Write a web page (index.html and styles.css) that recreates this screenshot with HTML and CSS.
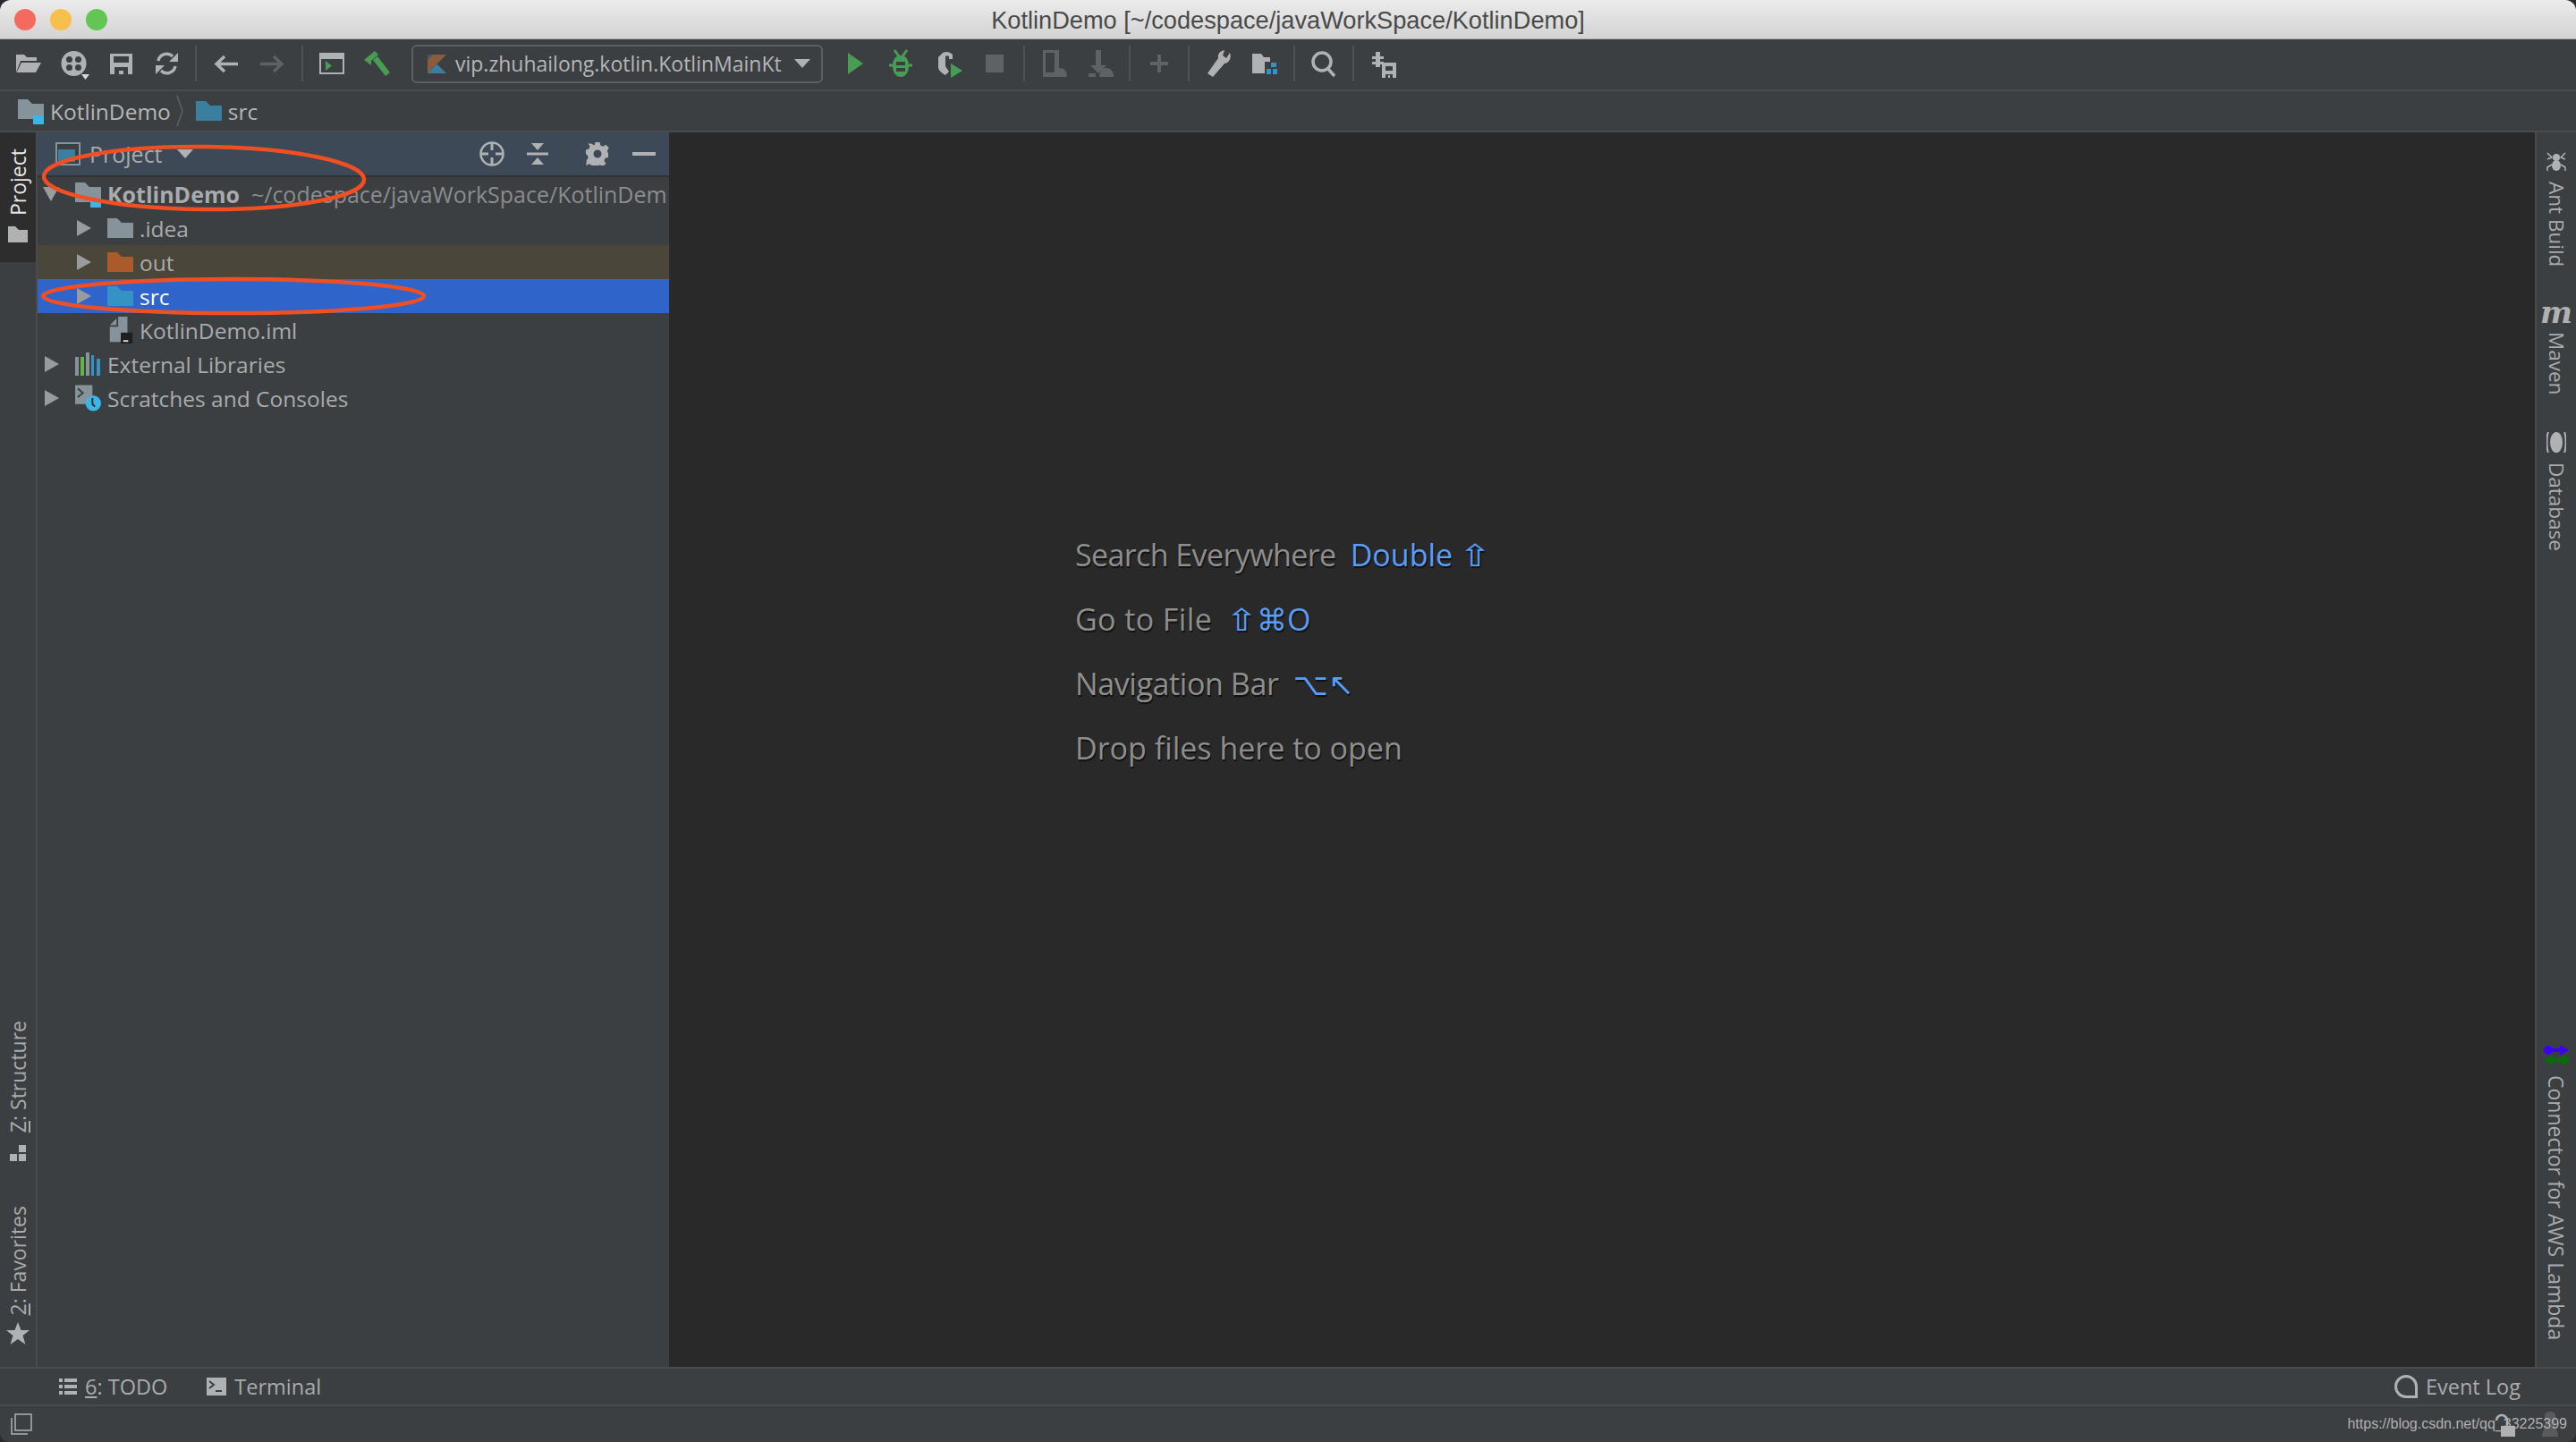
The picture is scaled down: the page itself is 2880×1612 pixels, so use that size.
FILE: index.html
```html
<!DOCTYPE html>
<html lang="en">
<head>
  <meta charset="UTF-8">
  <title>KotlinDemo</title>
  <link rel="stylesheet" href="styles.css">
</head>
<body>
  <svg class="defs" width="0" height="0">
    <symbol id="folder" viewBox="0 0 29 22"><path d="M0 0h11l5 5h13v17H0z"/></symbol>
  </svg>

  <div class="window">
    <header class="titlebar">
      <div class="lights">
        <span class="light red"></span>
        <span class="light yellow"></span>
        <span class="light green"></span>
      </div>
      <span class="title">KotlinDemo [~/codespace/javaWorkSpace/KotlinDemo]</span>
    </header>

    <div class="toolbar">
      <div class="tool-group files">
        <svg class="tool" viewBox="0 0 36 36"><path class="g" d="M4 8h9l3 3h11v4H9L4 28z"/><path class="g" d="M10 17h22l-6 11H4.5z"/></svg>
        <svg class="tool" viewBox="0 0 36 36"><path class="g" fill-rule="evenodd" d="M17.5 4a14 14 0 1 0 0 28 14 14 0 1 0 0-28z M12.5 10a3.5 3.5 0 1 0 0 7 3.500 3.500 0 1 0 0-7z M22.500 10a3.500 3.500 0 1 0 0 7 3.500 3.500 0 1 0 0-7z M12.500 19a3.500 3.500 0 1 0 0 7 3.500 3.500 0 1 0 0-7z M22.500 19a3.500 3.500 0 1 0 0 7 3.500 3.500 0 1 0 0-7z"/><path fill="#d8d8d8" d="M26 30h9l-4.500 6z"/></svg>
        <svg class="tool" viewBox="0 0 36 36"><path class="g" fill-rule="evenodd" d="M6 7h25v23H6z M10 10v7h17v-7z M11 22v8h5v-4h5v4h5v-8z"/></svg>
        <svg class="tool" viewBox="0 0 36 36"><path class="s" d="M9 15a9.500 9.500 0 0 1 16-5M28 21a9.500 9.500 0 0 1-16 5"/><path class="g" d="M31 6v10h-10zM6 30V20h10z"/></svg>
      </div>
      <span class="sep"></span>
      <div class="tool-group history">
        <svg class="tool" viewBox="0 0 36 36"><path class="s" d="M32 18.500H10M17 10l-9 8.500 9 8.500"/></svg>
        <svg class="tool" viewBox="0 0 36 36"><path class="s dim" d="M4 18.500h22M19 10l9 8.500-9 8.500"/></svg>
      </div>
      <span class="sep"></span>
      <div class="tool-group build">
        <svg class="tool" viewBox="0 0 36 36"><path class="g" fill-rule="evenodd" d="M4 6h28v24H4z M6 13v15h24V13z"/><path class="fill-green" d="M11 15l7 5.500-7 5.500z"/></svg>
        <svg class="tool" viewBox="0 0 36 36"><path class="fill-green" d="M4 14L16 4l4 4-8 7v5zM14 14l5-4 14 18-5 4z"/></svg>
      </div>

      <div class="run-combo">
        <svg class="kotlin" viewBox="0 0 21 21"><path fill="#8a5c3c" d="M0 0h21L0 21z"/><path fill="#3b7ea0" d="M0 21l10.500-10.500L21 21z"/><path fill="#3a5a78" d="M0 0h6L0 6z"/></svg>
        <span class="combo-text">vip.zhuhailong.kotlin.KotlinMainKt</span>
        <span class="down-arrow"></span>
      </div>

      <div class="tool-group run">
        <svg class="tool" viewBox="0 0 36 36"><path class="fill-green" d="M11 6l17 12-17 12z"/></svg>
        <svg class="tool" viewBox="0 0 36 36"><path class="fill-green" fill-rule="evenodd" d="M18 9c6 0 9 5 9 11.500S24 33 18 33 9 27 9 20.500 12 9 18 9z M13 16v4h10v-4z M13 23v4h10v-4z"/><path stroke="#499c54" stroke-width="3" d="M11 3l5 7M25 3l-5 7M5 20h4M27 20h4"/></svg>
        <svg class="tool" viewBox="0 0 36 36"><path class="g" d="M12 6c4-2 8-1 11 2v5h-4v-3c-2-1-3-1-4 0v11l4 6-4 4c-5-3-8-6-8-9V11z"/><path class="fill-green" d="M21 18l13 8-13 8z"/></svg>
        <svg class="tool" viewBox="0 0 36 36"><rect class="d" x="8" y="8" width="20" height="20"/></svg>
      </div>
      <span class="sep"></span>
      <div class="tool-group">
        <svg class="tool" viewBox="0 0 36 36"><path class="d" fill-rule="evenodd" d="M6 3h18v30H6z M9 6v22h10V6z"/><path class="d" d="M17 33c0-7 4-10 8-10s8 3 8 10z"/></svg>
        <svg class="tool" viewBox="0 0 36 36"><path class="d" d="M13 3h6v17h6l-9 9-9-9h6zM5 29h8v4H5z"/><path class="d" d="M17 33c0-7 4-10 8-10s8 3 8 10z"/></svg>
      </div>
      <span class="sep"></span>
      <svg class="tool" viewBox="0 0 36 36"><path class="d" d="M16 8h4v8h8v4h-8v8h-4v-8H8v-4h8z"/></svg>
      <span class="sep"></span>
      <div class="tool-group">
        <svg class="tool" viewBox="0 0 36 36"><path class="g" d="M31 6c2 5 0 11-6 12L12 33l-6-4 12-17c-1-5 2-8 7-9l-2 6 4 3z"/></svg>
        <svg class="tool" viewBox="0 0 36 36"><path class="g" d="M4 7h10l3 4h7v5h-6v13H4z"/><path fill="#3592c4" d="M25 17h6v5h-6zM20 24h5v6h-5zM27 24h5v6h-5z"/></svg>
      </div>
      <span class="sep"></span>
      <svg class="tool" viewBox="0 0 36 36"><circle class="ring" cx="16" cy="16" r="10"/><path class="s" d="M22 23l8 9"/></svg>
      <span class="sep"></span>
      <svg class="tool" viewBox="0 0 36 36"><path class="g" d="M6 10h4V5h5v5h4v3h-4v3h4v3h-4v3h-5v-3H6v-3h4v-3H6z"/><path class="g" fill-rule="evenodd" d="M17 17h16v17H17z M21 21v5h8v-5z M21 30v4h3v-3h2v3h3v-4z"/></svg>
    </div>

    <nav class="navbar">
      <svg class="nav-icon" viewBox="0 0 29 30"><path fill="#87939a" d="M0 2h11l5 5h13v17H0z"/><path fill="#3cb4e5" d="M17 20h12v12H17z"/></svg>
      <span class="crumb">KotlinDemo</span>
      <svg class="chevron" viewBox="0 0 10 34"><path d="M2 0l6 17-6 17" fill="none" stroke="#5f6163" stroke-width="1.500"/></svg>
      <svg class="nav-icon src-icon"><use href="#folder"/></svg>
      <span class="crumb">src</span>
    </nav>

    <div class="workspace">
      <aside class="strip left-strip">
        <div class="side-group">
          <div class="side-tab active">
            <span class="side-text">Project</span>
            <svg class="side-icon" width="22" height="18" viewBox="0 0 22 18"><path class="g" d="M0 0h8l4 4h10v14H0z"/></svg>
          </div>
        </div>
        <div class="side-group bottom">
          <div class="side-tab structure">
            <span class="side-text"><u>Z</u>: Structure</span>
            <svg class="side-icon" width="18" height="18" viewBox="0 0 18 18"><path class="g" d="M0 10h8v8H0zM10 0h8v8h-8zM10 10h8v8h-8z"/></svg>
          </div>
          <div class="side-tab">
            <span class="side-text"><u>2</u>: Favorites</span>
            <svg class="side-icon" width="26" height="25" viewBox="0 0 26 25"><path class="g" d="M13 0l3.500 9H26l-7.500 6 3 10L13 19l-8.500 6 3-10L0 9h9.500z"/></svg>
          </div>
        </div>
      </aside>

      <section class="project-panel">
        <div class="panel-header">
          <svg class="panel-icon" width="28" height="26" viewBox="0 0 28 26"><path fill="#87939a" d="M0 0h28v26H0z"/><path fill="#3b3f42" d="M2 2h24v22H2z"/><path fill="#3b7f9f" d="M3 8h19v14H3z"/></svg>
          <span class="panel-title">Project</span>
          <span class="down-arrow"></span>
          <div class="panel-actions">
            <svg width="30" height="30" viewBox="0 0 30 30"><circle class="ring thin" cx="15" cy="15" r="12.500"/><path class="g" d="M13.500 3h3v8h-3zM13.500 19h3v8h-3zM3 13.500h8v3H3zM19 13.500h8v3h-8z"/></svg>
            <svg width="24" height="24" viewBox="0 0 24 24"><path class="g" d="M5 0h14l-7 8zM0 10.500h24v3H0zM12 16l7 8H5z"/></svg>
            <span class="panel-sep"></span>
            <svg width="26" height="26" viewBox="0 0 26 26"><path class="g" fill-rule="evenodd" d="M10.500 0h5l.8 3.600 2.900 1.200 3.100-2 3.500 3.500-2 3.100 1.200 2.900 0 4.700-3.400.8-1.200 2.900 2 3.100-3.500 3.500-3.100-2-2.900 1.200-.8 2.500h-5l-.8-3.600-2.900-1.200-3.100 2L.8 20.200l2-3.100-1.200-2.900-1.600-.8v-5l3.400-.8 1.200-2.900-2-3.100L6.100 1.600l3.100 2 .8-1.200z M13 8.500a4.500 4.500 0 1 0 0 9 4.500 4.500 0 1 0 0-9z"/></svg>
            <svg class="minimize" width="26" height="4" viewBox="0 0 26 4"><path class="g" d="M0 0h26v4H0z"/></svg>
          </div>
        </div>

        <ul class="tree">
          <li class="row root">
            <span class="arrow open"></span>
            <svg class="tree-icon" viewBox="0 0 29 30"><path fill="#87939a" d="M0 2h11l5 5h13v17H0z"/><path fill="#3cb4e5" d="M17 20h12v12H17z"/></svg>
            <span class="label strong">KotlinDemo</span>
            <span class="path">~/codespace/javaWorkSpace/KotlinDem</span>
          </li>
          <li class="row nested">
            <span class="arrow"></span>
            <svg class="tree-icon folder-grey"><use href="#folder"/></svg>
            <span class="label">.idea</span>
          </li>
          <li class="row nested excluded">
            <span class="arrow"></span>
            <svg class="tree-icon folder-orange"><use href="#folder"/></svg>
            <span class="label">out</span>
          </li>
          <li class="row nested selected">
            <span class="arrow"></span>
            <svg class="tree-icon folder-blue"><use href="#folder"/></svg>
            <span class="label">src</span>
          </li>
          <li class="row nested">
            <span class="arrow blank"></span>
            <svg class="tree-icon" viewBox="0 0 29 32"><path fill="#87939a" d="M2 10L10 2v8zM12 0h11v30H2V12h10z"/><path fill="#1f1f1f" d="M15 19h14v13H15z"/><path fill="#ddd" d="M18 28h6v2h-6z"/></svg>
            <span class="label">KotlinDemo.iml</span>
          </li>
          <li class="row">
            <span class="arrow"></span>
            <svg class="tree-icon" viewBox="0 0 29 26"><path fill="#87939a" d="M0 5h4v21H0zM12 0h4v26h-4z"/><path fill="#62b543" d="M6 5h4v21H6z"/><path fill="#3592c4" d="M18 3h3v23h-3zM24 7h4v19h-4z"/></svg>
            <span class="label">External Libraries</span>
          </li>
          <li class="row">
            <span class="arrow"></span>
            <svg class="tree-icon" viewBox="0 0 30 30"><path fill="#87939a" d="M0 0h20v22H0z"/><path fill="none" stroke="#3c3f41" stroke-width="2" d="M3 4l6 5-6 5"/><circle fill="#3cb4e5" cx="21" cy="21" r="9"/><path fill="none" stroke="#2b2b2b" stroke-width="2" d="M20 15v7l3 3"/></svg>
            <span class="label">Scratches and Consoles</span>
          </li>
        </ul>
      </section>

      <main class="editor">
        <p class="hint search">Search Everywhere <b>Double <span class="key shift">⇧</span></b></p>
        <p class="hint goto">Go to File <b><span class="key shift">⇧</span><span class="key">⌘</span>O</b></p>
        <p class="hint navigate">Navigation Bar <b class="key">⌥↖</b></p>
        <p class="hint">Drop files here to open</p>
      </main>

      <aside class="strip right-strip">
        <div class="side-group">
          <div class="side-tab ant">
            <svg class="side-icon" width="22" height="22" viewBox="0 0 22 22"><ellipse class="g" cx="11" cy="6" rx="4" ry="4"/><ellipse class="g" cx="11" cy="15" rx="5" ry="6"/><path fill="none" stroke="#afb1b3" stroke-width="1.500" d="M1 1l5 5-5 2M21 1l-5 5 5 2M1 21v-4l5-3M21 21v-4l-5-3"/></svg>
            <span class="side-text">Ant Build</span>
          </div>
          <div class="side-tab maven">
            <span class="maven-m">m</span>
            <span class="side-text">Maven</span>
          </div>
          <div class="side-tab">
            <svg class="side-icon" width="22" height="23" viewBox="0 0 22 23"><path fill="none" stroke="#afb1b3" stroke-width="2" d="M2 0c-2 4-2 19 0 23M20 0c2 4 2 19 0 23"/><ellipse class="g" cx="11" cy="11.500" rx="7" ry="11.500"/></svg>
            <span class="side-text">Database</span>
          </div>
        </div>
        <div class="side-group">
          <div class="side-tab">
            <svg class="side-icon" width="28" height="23" viewBox="0 0 28 23"><circle fill="#3a00ff" cx="5" cy="6" r="5"/><path fill="#3a00ff" d="M5 4h13V0l10 6-10 6V8H5z"/><circle fill="#0a6b0a" cx="23" cy="17" r="5"/><path fill="#0a6b0a" d="M23 15H10v-4L0 17l10 6v-4h13z"/></svg>
            <span class="side-text long">Connector for AWS Lambda</span>
          </div>
        </div>
      </aside>
    </div>

    <div class="tool-tabs">
      <div class="tool-tab">
        <svg width="20" height="18" viewBox="0 0 20 18"><path class="g" d="M0 0h4v4H0zM6 0h14v4H6zM0 7h4v4H0zM6 7h14v4H6zM0 14h4v4H0zM6 14h14v4H6z"/></svg>
        <span><u>6</u>: TODO</span>
      </div>
      <div class="tool-tab terminal">
        <svg width="22" height="20" viewBox="0 0 22 20"><path class="g" d="M0 0h22v20H0z"/><path fill="none" stroke="#3c3f41" stroke-width="2" d="M3 4l5 4-5 4M10 15h7"/></svg>
        <span>Terminal</span>
      </div>
      <div class="tool-tab event-log">
        <svg width="26" height="26" viewBox="0 0 26 26"><path fill="none" stroke="#afb1b3" stroke-width="3" d="M24.500 24.500H13a11.500 11.500 0 1 1 11.500-11.500z"/></svg>
        <span>Event Log</span>
      </div>
    </div>

    <footer class="statusbar">
      <svg width="24" height="24" viewBox="0 0 24 24"><path fill="none" stroke="#afb1b3" stroke-width="1.500" d="M5 1h18v18H5zM1 5v18h18"/></svg>
      <svg class="person" width="18" height="28" viewBox="0 0 18 28"><path fill="#585a5c" d="M3 4a6 4 0 0 1 12 0v14l3 7v3H0v-3l3-7z"/></svg>
      <svg class="lock" width="24" height="26" viewBox="0 0 24 26"><path fill="none" stroke="#afb1b3" stroke-width="2.500" d="M3 8a6 6 0 0 1 12 0v6"/><path class="g" d="M8 14h16v12H8z"/></svg>
      <span class="watermark">https://blog.csdn.net/qq_33225399</span>
    </footer>
  </div>

  <svg class="marks" viewBox="0 0 2880 1612">
    <ellipse cx="228" cy="199" rx="179" ry="35" transform="rotate(0.600 228 199)"/>
    <ellipse cx="261" cy="331" rx="213" ry="19"/>
  </svg>
</body>
</html>
```

FILE: styles.css
```css
* {
  box-sizing: border-box;
  margin: 0;
  padding: 0;
}

body {
  height: 100vh;
  overflow: hidden;
  background: #2a2830;
  font-family: "Open Sans", "DejaVu Sans", sans-serif;
  color: #a9abad;
}

.defs {
  position: absolute;
}

.g {
  fill: #afb1b3;
}

.d {
  fill: #5f6163;
}

.s {
  fill: none;
  stroke: #afb1b3;
  stroke-width: 3.5;
}

.s.dim {
  stroke: #5f6163;
}

.ring {
  fill: none;
  stroke: #afb1b3;
  stroke-width: 3.5;
}

.ring.thin {
  stroke-width: 2.5;
}

.fill-green {
  fill: #499c54;
}

.window {
  height: 100%;
  display: flex;
  flex-direction: column;
  background: #3c3f41;
  border-radius: 12px 12px 10px 10px;
  overflow: hidden;
}

.titlebar {
  flex: none;
  height: 44px;
  display: flex;
  align-items: center;
  justify-content: center;
  position: relative;
  background: linear-gradient(#ebebeb, #d3d3d3);
  border-bottom: 1px solid #b0b0b0;
}

.title {
  padding-top: 2px;
  font: 27.2px "Liberation Sans", sans-serif;
  color: #4a4a4a;
}

.lights {
  position: absolute;
  left: 16px;
  top: 10px;
  display: flex;
  gap: 16px;
}

.light {
  width: 24px;
  height: 24px;
  border-radius: 50%;
}

.red { background: #f46a5f; }
.yellow { background: #f8bf4c; }
.green { background: #62c554; }

.toolbar {
  flex: none;
  height: 58px;
  display: flex;
  align-items: center;
  padding-left: 14px;
  padding-bottom: 2px;
  border-bottom: 2px solid #4b4b4b;
}

.tool-group {
  flex: none;
  display: flex;
  gap: 16px;
}

.tool-group.files { gap: 15.33px; }
.tool-group.history { gap: 17px; }
.tool-group.build { gap: 14px; }
.tool-group.run { gap: 16.5px; margin-left: 17px; }

.tool {
  flex: none;
  width: 36px;
  height: 36px;
}

.sep {
  flex: none;
  width: 2px;
  height: 40px;
  margin: 0 14px;
  background: #505254;
}

.run-combo {
  flex: none;
  width: 460px;
  height: 43px;
  margin-left: 21px;
  padding-left: 16px;
  display: flex;
  align-items: center;
  border: 2px solid #5e6060;
  border-radius: 6px;
}

.kotlin {
  flex: none;
  width: 21px;
  height: 21px;
}

.combo-text {
  flex: none;
  margin-left: 10px;
  width: 363px;
  font-size: 23px;
  white-space: nowrap;
  color: #b4b6b8;
}

.down-arrow {
  display: inline-block;
  width: 0;
  height: 0;
  margin-left: 16px;
  border-left: 9px solid transparent;
  border-right: 9px solid transparent;
  border-top: 10px solid #afb1b3;
}

.navbar {
  flex: none;
  height: 46px;
  display: flex;
  align-items: center;
  padding-left: 20px;
  border-bottom: 2px solid #4b4b4b;
}

.nav-icon {
  width: 29px;
  height: 30px;
  fill: #87939a;
}

.src-icon {
  height: 22px;
  fill: #3b7f9f;
}

.crumb {
  margin-left: 7px;
  font-size: 24.5px;
  color: #b4b6b8;
}

.chevron {
  width: 10px;
  height: 34px;
  margin: 0 13px 0 5px;
}

.workspace {
  flex: 1;
  display: flex;
  min-height: 0;
}

.strip {
  flex: none;
  display: flex;
  flex-direction: column;
  justify-content: space-between;
}

.left-strip {
  width: 42px;
  border-right: 2px solid #4b4b4b;
}

.right-strip {
  width: 46px;
  border-left: 2px solid #4b4b4b;
}

.side-group {
  display: flex;
  flex-direction: column;
  align-items: center;
}

.left-strip .side-group.bottom {
  gap: 50px;
  padding-bottom: 25px;
}

.right-strip .side-group {
  gap: 46px;
  padding-top: 22px;
  padding-bottom: 30px;
}

.side-tab {
  display: flex;
  flex-direction: column;
  align-items: center;
  gap: 11px;
}

.left-strip .side-tab {
  gap: 8px;
}

.left-strip .side-tab.structure {
  gap: 13px;
}

.left-strip .side-tab.active {
  width: 40px;
  height: 145px;
  padding-top: 18px;
  background: #2d2d2d;
  gap: 12px;
}

.side-tab.active .side-text {
  color: #e8e8e8;
}

.side-tab.ant {
  margin-bottom: -5px;
}

.side-tab.maven {
  margin-bottom: -5px;
}

.side-text {
  writing-mode: vertical-rl;
  font-size: 23px;
  line-height: 30px;
  white-space: nowrap;
  color: #a9abad;
}

.right-strip .side-text {
  font-size: 22.5px;
}

.right-strip .side-text.long {
  font-size: 23px;
}

.left-strip .side-text {
  transform: rotate(180deg);
}

.maven-m {
  font: italic 700 34px/21px "DejaVu Serif", serif;
  color: #afb1b3;
}

.project-panel {
  flex: none;
  width: 708px;
  border-right: 2px solid #2b2b2b;
  overflow: hidden;
}

.panel-header {
  height: 50px;
  display: flex;
  align-items: center;
  padding-left: 20px;
  background: #3d4956;
  border-bottom: 2px solid #323232;
}

.panel-title {
  margin-left: 10px;
  font-size: 25px;
  color: #a9abad;
}

.panel-header .down-arrow {
  margin-left: 16px;
}

.panel-actions {
  margin-left: auto;
  padding-right: 15px;
  display: flex;
  align-items: center;
  gap: 24px;
}

.panel-sep {
  width: 2px;
  height: 40px;
  background: #46494c;
  margin: 0 -4px;
}

.minimize {
  margin-left: 2px;
}

.tree {
  list-style: none;
}

.row {
  height: 38px;
  display: flex;
  align-items: center;
  padding-left: 8px;
  white-space: nowrap;
  font-size: 24.5px;
}

.row.nested {
  padding-left: 44px;
}

.row.excluded {
  background: #4a463a;
}

.row.selected {
  background: #2f65ca;
}

.row.selected .label {
  color: #fff;
}

.arrow {
  flex: none;
  width: 0;
  height: 0;
  border-top: 9px solid transparent;
  border-bottom: 9px solid transparent;
  border-left: 16px solid #9a9b9c;
}

.arrow.open {
  margin-left: -2px;
  border-left: 9px solid transparent;
  border-right: 9px solid transparent;
  border-top: 16px solid #9a9b9c;
  border-bottom: 0;
}

.arrow.blank {
  border-left-color: transparent;
}

.tree-icon {
  flex: none;
  width: 29px;
  height: 30px;
  margin-left: 18px;
}

.folder-grey, .folder-orange, .folder-blue {
  height: 22px;
}

.folder-grey { fill: #87939a; }
.folder-orange { fill: #ab5a2c; }
.folder-blue { fill: #3592c4; }

.label {
  margin-left: 7px;
  color: #a9abad;
}

.label.strong {
  font-weight: 700;
  font-size: 25px;
}

.path {
  margin-left: 13px;
  font-size: 25px;
  color: #8a8c8e;
}

.editor {
  flex: 1;
  padding: 451px 0 0 452px;
  background: #292929;
  display: flex;
  flex-direction: column;
  gap: 30px;
}

.hint {
  height: 42px;
  font-size: 34px;
  line-height: 42px;
  color: #8e8e8e;
  text-shadow: 1px 2px 1px #111;
  white-space: pre;
}

.hint b {
  margin-left: 8px;
  font-weight: 400;
  letter-spacing: 0;
  color: #589df6;
}

.hint.search { letter-spacing: -0.6px; }
.hint.goto { letter-spacing: 0.4px; }
.hint.navigate { letter-spacing: -0.4px; }

.key {
  font-family: "DejaVu Sans", sans-serif;
}

.key.shift {
  display: inline-block;
  margin: 0 2px;
  transform: scaleX(1.3);
}

.tool-tabs {
  flex: none;
  height: 44px;
  display: flex;
  align-items: center;
  padding-left: 66px;
  border-top: 2px solid #4b4b4b;
  border-bottom: 2px solid #4b4b4b;
}

.tool-tab {
  display: flex;
  align-items: center;
  gap: 9px;
  font-size: 23.5px;
  color: #a9abad;
}

.terminal {
  margin-left: 44px;
}

.event-log {
  margin-left: auto;
  margin-right: 62px;
}

.statusbar {
  flex: none;
  height: 40px;
  display: flex;
  align-items: center;
  justify-content: space-between;
  padding: 0 10px 0 12px;
  position: relative;
}

.watermark {
  position: relative;
  font: 16px "Liberation Sans", sans-serif;
  color: #b0b0b0;
}

.lock {
  position: absolute;
  right: 68px;
  top: 8px;
}

.person {
  position: absolute;
  right: 20px;
  top: 6px;
}

.marks {
  position: absolute;
  left: 0;
  top: 0;
  width: 2880px;
  height: 1612px;
  fill: none;
  stroke: #f04e23;
  stroke-width: 4.5;
  pointer-events: none;
}
```
